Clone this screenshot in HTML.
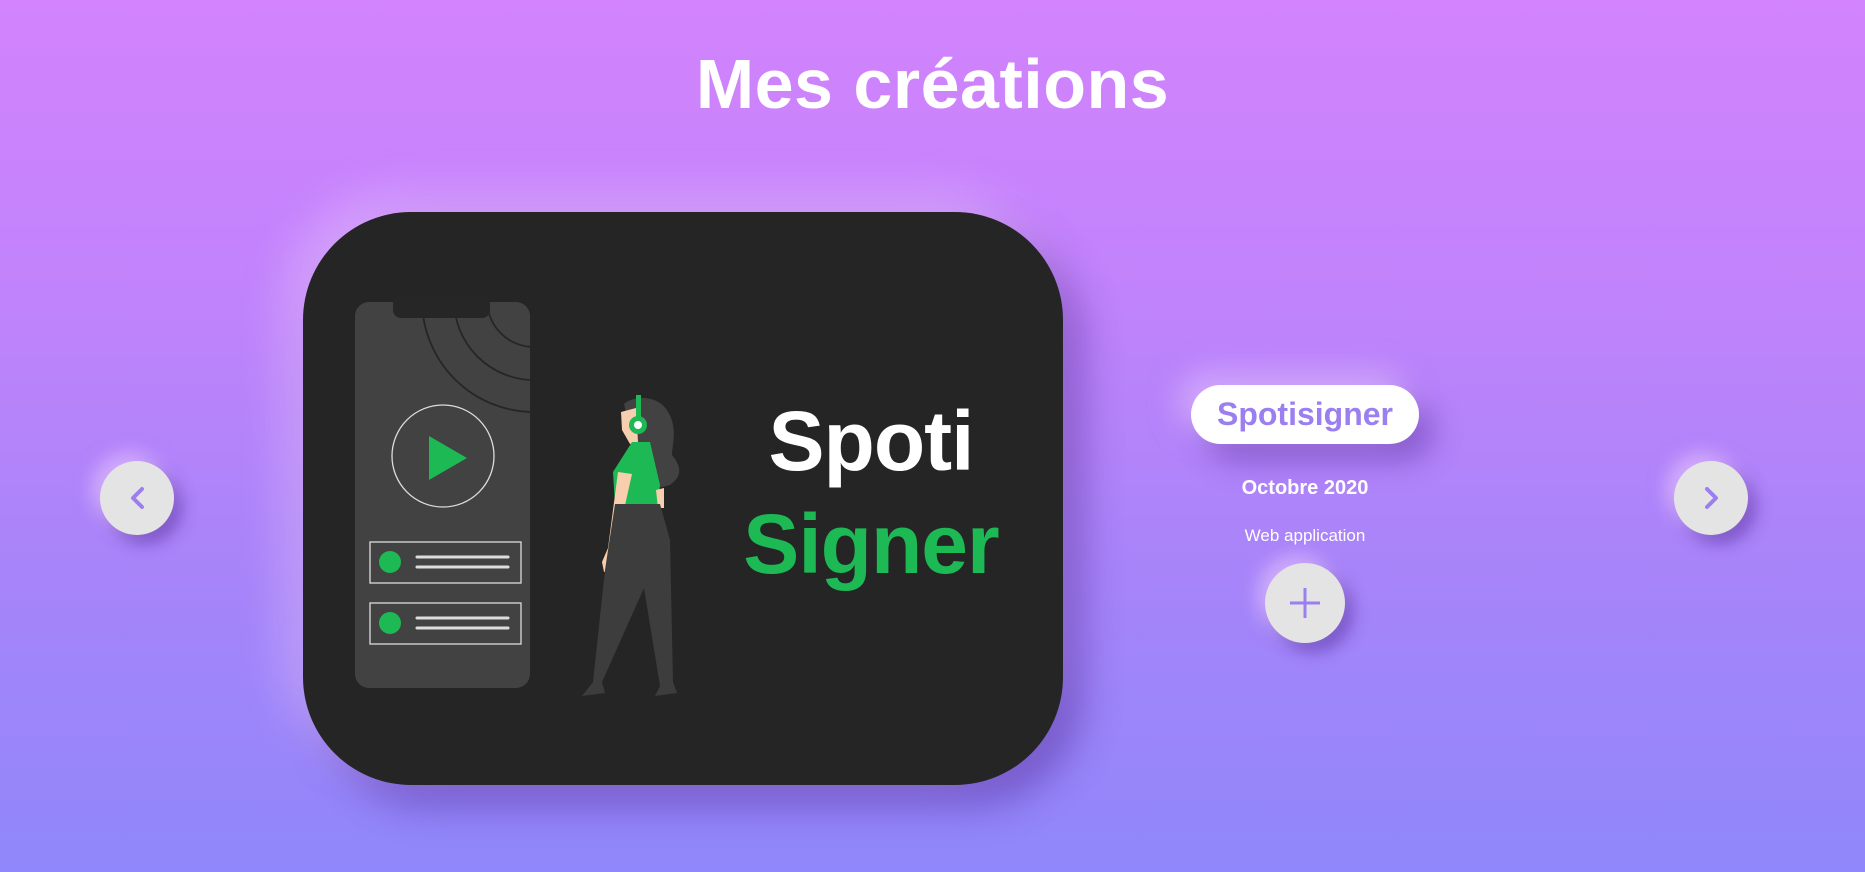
<!DOCTYPE html>
<html><head><meta charset="utf-8">
<style>
html,body{margin:0;padding:0;}
body{width:1865px;height:872px;overflow:hidden;position:relative;
background:linear-gradient(180deg,#d283fd 0%,#c083fb 35%,#a884f9 65%,#8f87fb 100%);
font-family:"Liberation Sans",sans-serif;}
h1{position:absolute;left:0;width:1865px;top:46px;margin:0;text-align:center;color:#fff;font-size:70px;font-weight:bold;letter-spacing:0.5px;line-height:1.1;}
.card{position:absolute;left:303px;top:212px;width:760px;height:573px;border-radius:108px;background:#252525;
box-shadow:-18px -18px 45px rgba(235,200,255,0.45),18px 20px 40px rgba(70,30,140,0.45);}
.circ{position:absolute;border-radius:50%;background:#e4e4e4;box-shadow:-8px -8px 18px rgba(240,210,255,0.55),8px 9px 16px rgba(70,30,140,0.45);}
.pill{position:absolute;left:1191px;top:385px;width:228px;height:59px;border-radius:30px;background:#fff;color:#9b7ef0;font-weight:bold;font-size:32px;text-align:center;line-height:59px;
box-shadow:-12px -12px 30px rgba(240,210,255,0.5),14px 16px 30px rgba(70,30,140,0.4);}
.t{position:absolute;left:1150px;width:310px;text-align:center;color:#fff;}
</style></head><body>
<h1>Mes créations</h1>
<div class="card"></div>
<svg style="position:absolute;left:0;top:0" width="1865" height="872">
<defs><clipPath id="ph"><rect x="355" y="302" width="175" height="386" rx="14"/></clipPath></defs>
<rect x="355" y="302" width="175" height="386" rx="14" fill="#424242"/>
<g clip-path="url(#ph)" fill="none" stroke="#262626" stroke-width="1.8">
<circle cx="534" cy="300" r="112"/><circle cx="534" cy="300" r="80"/><circle cx="534" cy="300" r="47"/>
</g>
<rect x="393" y="296" width="97" height="22" rx="8" fill="#262626"/>
<circle cx="443" cy="456" r="51" fill="none" stroke="#ddd" stroke-width="1.3"/>
<polygon points="429,436 429,480 467,458" fill="#1db954"/>
<rect x="370" y="542" width="151" height="41" fill="none" stroke="#ddd" stroke-width="1.3"/>
<circle cx="390" cy="562" r="11" fill="#1db954"/>
<line x1="417" y1="557" x2="508" y2="557" stroke="#ddd" stroke-width="3" stroke-linecap="round"/>
<line x1="417" y1="567" x2="508" y2="567" stroke="#ddd" stroke-width="3" stroke-linecap="round"/>
<rect x="370" y="603" width="151" height="41" fill="none" stroke="#ddd" stroke-width="1.3"/>
<circle cx="390" cy="623" r="11" fill="#1db954"/>
<line x1="417" y1="618" x2="508" y2="618" stroke="#ddd" stroke-width="3" stroke-linecap="round"/>
<line x1="417" y1="628" x2="508" y2="628" stroke="#ddd" stroke-width="3" stroke-linecap="round"/>
<g transform="translate(560,390)">
<path d="M64,14 C75,4 100,6 108,22 C118,38 112,55 112,65 C120,75 124,85 110,95 L98,98 L92,60 L72,50 Z" fill="#424242"/>
<path d="M61,22 L76,18 L78,52 L70,54 L62,40 Z" fill="#f8cfae"/>
<path d="M72,52 L90,52 L100,95 L98,115 L55,115 L53,82 Z" fill="#1db954"/>
<path d="M58,82 L72,84 L55,160 L52,180 L44,182 L42,172 L48,158 Z" fill="#f8cfae"/>
<path d="M96,100 L104,98 L104,118 L98,118 Z" fill="#f8cfae"/>
<path d="M55,114 L100,114 L110,150 L113,292 L117,303 L95,306 L100,296 L84,198 L42,292 L45,303 L22,306 L33,292 L45,180 Z" fill="#3d3d3d"/>
<rect x="76" y="5" width="5" height="24" fill="#1db954"/>
<circle cx="78" cy="35" r="9" fill="#1db954"/><circle cx="78" cy="35" r="4" fill="#fff"/>
</g>
<text x="871" y="470" text-anchor="middle" fill="#fff" font-family="Liberation Sans" font-weight="bold" font-size="84" letter-spacing="-1">Spoti</text>
<text x="871" y="573" text-anchor="middle" fill="#1db954" font-family="Liberation Sans" font-weight="bold" font-size="84" letter-spacing="-1">Signer</text>
</svg>
<div class="circ" style="left:100px;top:461px;width:74px;height:74px"></div>
<div class="circ" style="left:1674px;top:461px;width:74px;height:74px"></div>
<div class="circ" style="left:1265px;top:563px;width:80px;height:80px"></div>
<svg style="position:absolute;left:0;top:0" width="1865" height="872">
<polyline points="142,489 133,498 142,507" fill="none" stroke="#9b7ef0" stroke-width="4" stroke-linecap="round" stroke-linejoin="round"/>
<polyline points="1707,489 1716,498 1707,507" fill="none" stroke="#9b7ef0" stroke-width="4" stroke-linecap="round" stroke-linejoin="round"/>
<line x1="1305" y1="588" x2="1305" y2="618" stroke="#9b7ef0" stroke-width="3"/>
<line x1="1290" y1="603" x2="1320" y2="603" stroke="#9b7ef0" stroke-width="3"/>
</svg>
<div class="pill">Spotisigner</div>
<div class="t" style="top:477px;font-size:20px;font-weight:bold;">Octobre 2020</div>
<div class="t" style="top:526px;font-size:17px;">Web application</div>
</body></html>
